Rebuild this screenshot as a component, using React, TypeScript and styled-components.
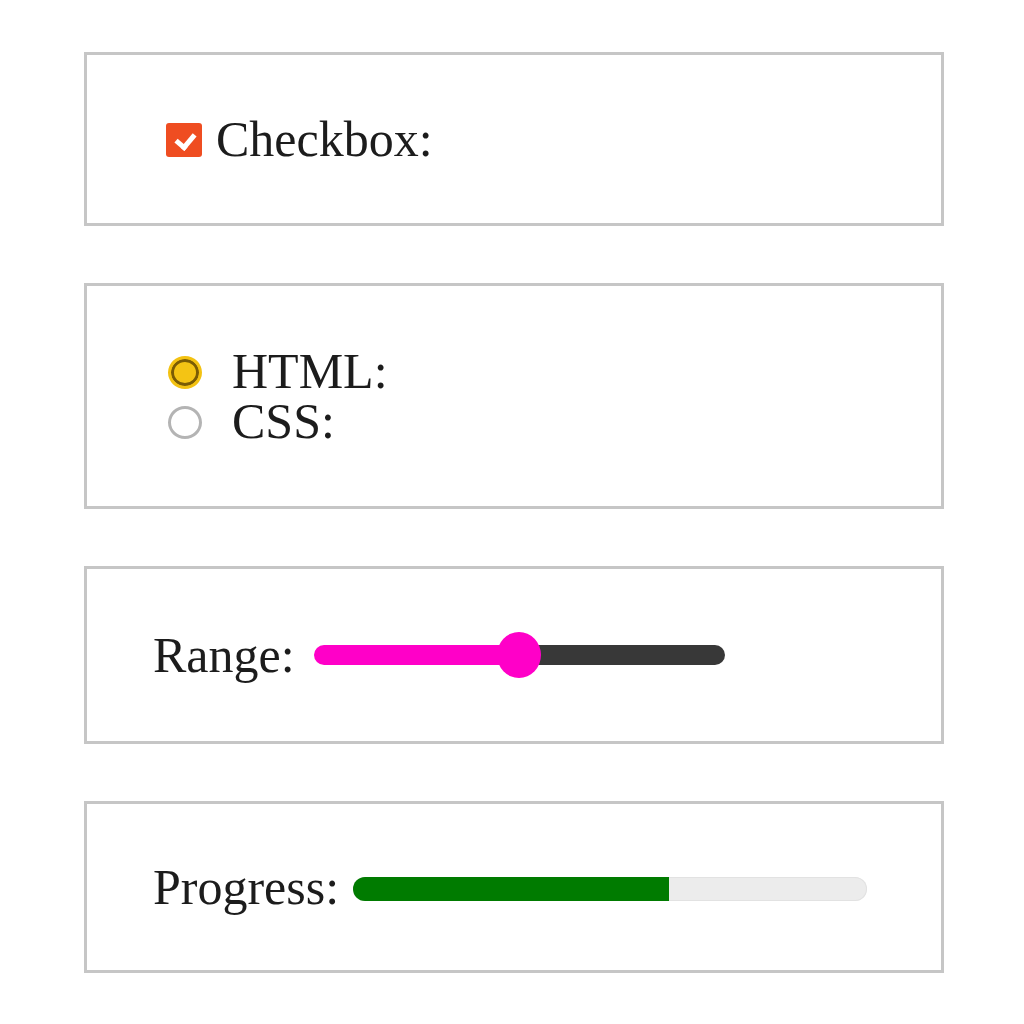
import styled, { createGlobalStyle } from "styled-components";

// GLOBAL
const GlobalStyle = createGlobalStyle`
  html, body {
    margin: 0;
    padding: 0;
    background: #ffffff;
  }
  body {
    font-family: "Liberation Serif", "Times New Roman", serif;
    color: #1c1c1c;
  }
`;

// STYLED COMPONENTS
const Page = styled.div`
  width: 1024px;
  padding: 52px 80px 40px 84px;
  box-sizing: border-box;
  display: flex;
  flex-direction: column;
  gap: 57px;
`;

const Panel = styled.fieldset`
  margin: 0;
  width: 860px;
  box-sizing: border-box;
  border: 3px solid #c6c6c6;
  padding: ${(p: { $py: number }) => p.$py}px 66px;
  font-size: 50px;
  line-height: 50px;
  min-inline-size: 0;
`;

const Line = styled.label`
  display: flex;
  align-items: center;
  height: 50px;
`;

const Check = styled.input.attrs({ type: "checkbox" })`
  appearance: none;
  margin: 2px 14px 0 13px;
  width: 36px;
  height: 34px;
  border-radius: 3px;
  background: #ef4d21;
  position: relative;
  flex-shrink: 0;

  &::after {
    content: "";
    position: absolute;
    left: 13px;
    top: 7px;
    width: 8px;
    height: 14px;
    border: solid #ffffff;
    border-width: 0 5px 5px 0;
    transform: rotate(40deg);
  }
`;

const Radio = styled.input.attrs({ type: "radio" })`
  appearance: none;
  margin: 2px 30px 0 15px;
  width: 34px;
  height: 33px;
  border-radius: 50%;
  box-sizing: border-box;
  flex-shrink: 0;
  border: 3px solid #b4b4b4;
  background: #ffffff;

  &:checked {
    border: 3px solid #f3c212;
    background: #f4c414;
    box-shadow: inset 0 0 0 3px #7a5c05;
  }
`;

const Label = styled.span`
  margin-right: ${(p: { $gap: number }) => p.$gap}px;
`;

const Range = styled.input.attrs({ type: "range" })`
  appearance: none;
  -webkit-appearance: none;
  margin: 0;
  width: 411px;
  height: 20px;
  border-radius: 10px;
  background: linear-gradient(
    to right,
    #ff00c8 0%,
    #ff00c8 ${(p: { $pct: number }) => p.$pct}%,
    #383838 ${(p: { $pct: number }) => p.$pct}%,
    #383838 100%
  );
  outline: none;

  &::-webkit-slider-thumb {
    -webkit-appearance: none;
    width: 44px;
    height: 46px;
    border-radius: 50%;
    background: #ff00c8;
    border: none;
  }
`;

const Progress = styled.progress`
  appearance: none;
  -webkit-appearance: none;
  width: 514px;
  height: 24px;
  margin-top: 4px;
  border: none;

  &::-webkit-progress-bar {
    background: #ececec;
    border-radius: 12px;
    box-shadow: inset 0 0 0 1px #e2e2e2;
  }
  &::-webkit-progress-value {
    background: #007b00;
    border-radius: 12px 0 0 12px;
  }
`;

export default function App() {
  const rangeValue = 50;
  return (
    <>
      <GlobalStyle />
      <Page>
        <Panel $py={59}>
          <Line>
            <Check defaultChecked />
            Checkbox:
          </Line>
        </Panel>

        <Panel $py={60}>
          <Line>
            <Radio name="lang" defaultChecked />
            HTML:
          </Line>
          <Line>
            <Radio name="lang" />
            CSS:
          </Line>
        </Panel>

        <Panel $py={61}>
          <Line>
            <Label $gap={19}>Range:</Label>
            <Range $pct={rangeValue} defaultValue={rangeValue} min={0} max={100} />
          </Line>
        </Panel>

        <Panel $py={58}>
          <Line>
            <Label $gap={14}>Progress:</Label>
            <Progress value={61.5} max={100} />
          </Line>
        </Panel>
      </Page>
    </>
  );
}
